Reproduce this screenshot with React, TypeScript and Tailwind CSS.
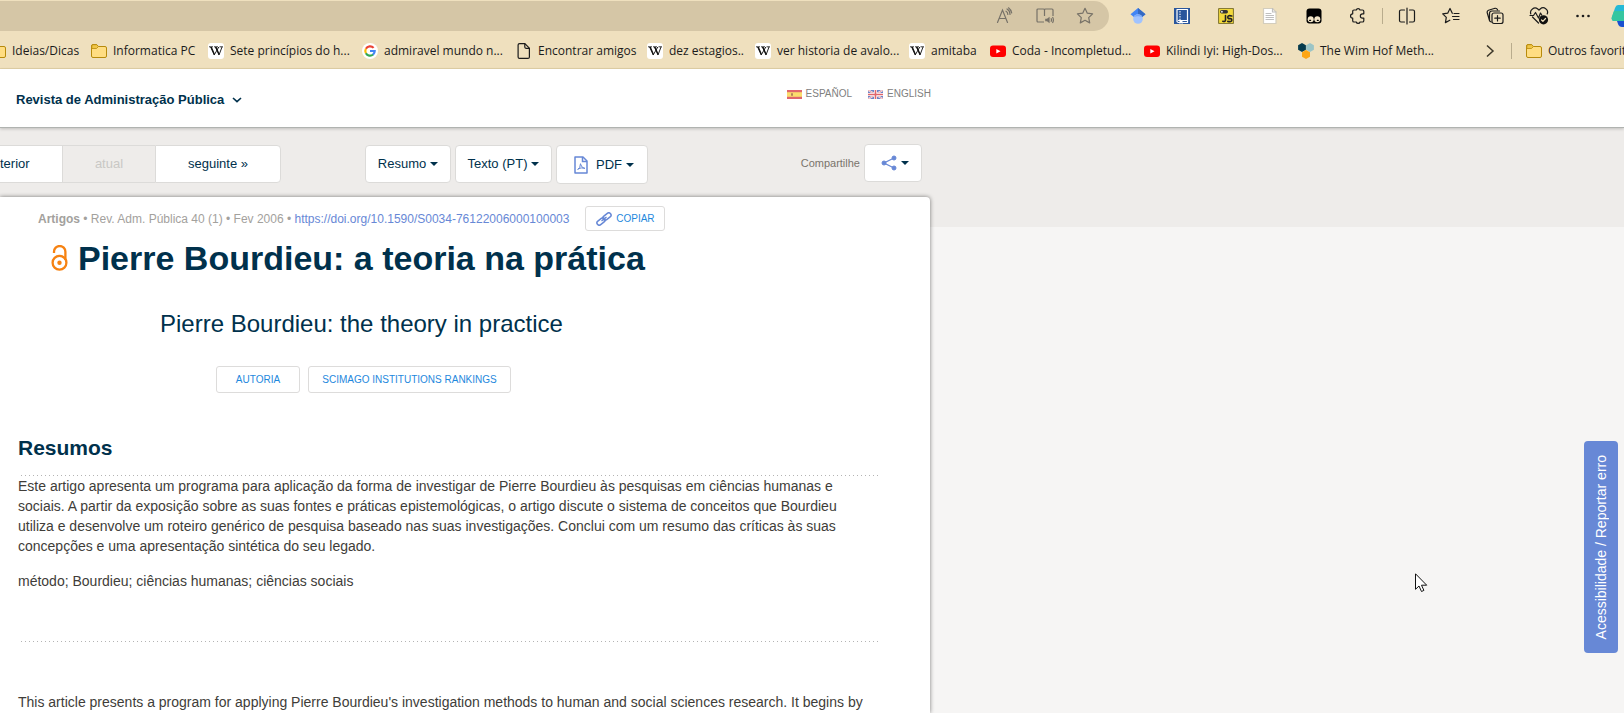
import type { ReactNode } from "react";

const ui = "font-['Open_Sans','Noto_Sans',sans-serif]";

function Folder() {
  return (
    <svg width="16" height="16" viewBox="0 0 16 16" className="shrink-0" aria-hidden="true">
      <path d="M.5 3A1.5 1.5 0 0 1 2 1.500h3.600L7.500 3.500H14A1.500 1.500 0 0 1 15.500 5v8A1.500 1.500 0 0 1 14 14.500H2A1.500 1.500 0 0 1 .5 13z" fill="#ffdd82" stroke="#b78a0c" />
      <path d="M.8 5.500h4.700l2-2L5.600 1.700H2A1.200 1.200 0 0 0 .8 3z" fill="#f0c648" stroke="#b78a0c" strokeWidth=".8" />
    </svg>
  );
}

function Wiki() {
  return (
    <span className="flex size-4 shrink-0 items-center justify-center rounded-[3px] bg-white">
      <svg width="16" height="16" viewBox="0 0 16 16" aria-hidden="true">
        <path d="M1 3.800h4M6 3.800h4M11.500 3.800h3.500" stroke="#222" strokeWidth=".9" />
        <path d="M2.700 4l3.500 8L10.800 4M7.400 4l3.600 8 3-8" fill="none" stroke="#222" strokeWidth="1" />
        <path d="M2.400 4h1.500l2.900 6.700-.6 1.500zM7.200 4h1.400l2.900 6.700-.6 1.500z" fill="#111" />
      </svg>
    </span>
  );
}

function Google() {
  return (
    <svg width="16" height="16" viewBox="0 0 16 16" className="shrink-0" aria-hidden="true">
      <circle cx="8" cy="8" r="8" fill="#fff" />
      <g fill="none" strokeWidth="2.200">
        <path d="M11.600 4.900A4.700 4.700 0 0 0 3.900 5.800" stroke="#ea4335" />
        <path d="M3.900 5.700a4.700 4.700 0 0 0 0 4.600" stroke="#fbbc05" />
        <path d="M3.900 10.200a4.700 4.700 0 0 0 7.200 1.300" stroke="#34a853" />
        <path d="M11 11.600A4.700 4.700 0 0 0 12.700 8H8" stroke="#4285f4" />
      </g>
    </svg>
  );
}

function Doc() {
  return (
    <svg width="16" height="16" viewBox="0 0 16 16" fill="none" stroke="#1b1b1b" strokeWidth="1.200" className="shrink-0" aria-hidden="true">
      <path d="M3.600.6h5.200l4.600 4.600v8.700a1.500 1.500 0 0 1-1.500 1.500H3.600a1.500 1.500 0 0 1-1.500-1.500V2.100A1.500 1.500 0 0 1 3.600.6z" />
      <path d="M8.800.8v3.300a1.200 1.200 0 0 0 1.200 1.200h3.300" />
    </svg>
  );
}

function Tube() {
  return (
    <svg width="16" height="16" viewBox="0 0 16 16" className="shrink-0" aria-hidden="true">
      <rect x="0" y="2.500" width="16" height="11.500" rx="3" fill="#f00" />
      <path d="M6.300 5.900v4.700l4.200-2.350z" fill="#fff" />
    </svg>
  );
}

function Hexes() {
  return (
    <svg width="16" height="16" viewBox="0 0 16 16" className="shrink-0" aria-hidden="true">
      <path d="M4 0l3.900 2.200v4.500L4 9 .1 6.700V2.200z" fill="#063b4d" />
      <path d="M12 0l3.900 2.200v4.500L12 9 8.100 6.700V2.200z" fill="#9cc5c6" />
      <path d="M8 7l4 2.200v4.500L8 16l-4-2.300V9.200z" fill="#fda616" />
    </svg>
  );
}

const bookmarks: { icon: ReactNode; label: string; width: string }[] = [
  { icon: <Folder />, label: "Ideias/Dicas", width: "w-[101px]" },
  { icon: <Folder />, label: "Informatica PC", width: "w-[117px]" },
  { icon: <Wiki />, label: "Sete princípios do h...", width: "w-[154px]" },
  { icon: <Google />, label: "admiravel mundo n...", width: "w-[154px]" },
  { icon: <Doc />, label: "Encontrar amigos", width: "w-[131px]" },
  { icon: <Wiki />, label: "dez estagios..", width: "w-[108px]" },
  { icon: <Wiki />, label: "ver historia de avalo...", width: "w-[154px]" },
  { icon: <Wiki />, label: "amitaba", width: "w-[81px]" },
  { icon: <Tube />, label: "Coda - Incompletud...", width: "w-[154px]" },
  { icon: <Tube />, label: "Kilindi Iyi: High-Dos...", width: "w-[154px]" },
  { icon: <Hexes />, label: "The Wim Hof Meth...", width: "w-[154px]" },
];

function Ico({ label, children, w = 18 }: { label: string; children: ReactNode; w?: number }) {
  return (
    <button type="button" aria-label={label} className="flex w-11 shrink-0 items-center justify-center">
      <svg width={w} height={w} viewBox={`0 0 ${w} ${w}`} fill="none" stroke="#1b1b1b" strokeWidth="1.200" strokeLinejoin="round" strokeLinecap="round" aria-hidden="true">
        {children}
      </svg>
    </button>
  );
}

function Toolbar() {
  return (
    <div className="flex h-8 items-center overflow-hidden">
      <div className="flex h-[30px] min-w-0 flex-1 items-center justify-end rounded-r-full bg-[#d5c6a6] pr-1">
        <button type="button" aria-label="Ler em voz alta" className="flex w-10 items-center justify-center">
          <svg width="18" height="18" viewBox="0 0 18 18" fill="none" stroke="#777268" strokeWidth="1.200" strokeLinecap="round" aria-hidden="true">
            <path d="M1.500 15.500L6.500 3l5 12.500M3.200 11.500h6.600M10 4.200a3.500 3.500 0 0 1 1.800 3.200M11 2a6 6 0 0 1 3 5.400M12.500.8A8 8 0 0 1 15.700 6" />
          </svg>
        </button>
        <button type="button" aria-label="Leitor imersivo" className="flex w-10 items-center justify-center">
          <svg width="18" height="18" viewBox="0 0 18 18" fill="none" stroke="#777268" strokeWidth="1.200" aria-hidden="true">
            <path d="M8 15H2a1 1 0 0 1-1-1V3a1 1 0 0 1 1-1h5.500a1 1 0 0 1 1 1v6M8.500 3a1 1 0 0 1 1-1H16a1 1 0 0 1 1 1v6" />
            <path d="M9.200 11.800H11l2.600-2v6.400l-2.600-2H9.200z" fill="#777268" stroke="none" />
            <path d="M15 11.300q1 1.700 0 3.400M16.500 10q1.800 3 0 6" />
          </svg>
        </button>
        <button type="button" aria-label="Favoritar" className="flex w-10 items-center justify-center">
          <svg width="18" height="18" viewBox="0 0 18 18" fill="none" stroke="#777268" strokeWidth="1.200" strokeLinejoin="round" aria-hidden="true">
            <path d="M9 1.300l2.300 4.900 5.300.7-3.900 3.700 1 5.300L9 13.300l-4.700 2.600 1-5.300L1.400 6.900l5.300-.7z" />
          </svg>
        </button>
      </div>
      <div className="flex w-[515px] shrink-0 items-center pl-[7px]">
        <Ico label="Google Acadêmico" w={16}>
          <g stroke="none">
            <path d="M8 0L.5 6.300 3.800 9h8.400l3.300-2.700z" fill="#4285f4" />
            <path d="M8 0l7.500 6.300L12.200 9H8z" fill="#356ac3" />
            <circle cx="8" cy="11" r="4.800" fill="#a0c3ff" />
            <path d="M3.600 9.200a4.900 4.900 0 0 1 8.800 0q-4.400-1.800-8.800 0z" fill="#76a7fa" />
          </g>
        </Ico>
        <Ico label="Caderno" w={16}>
          <rect width="16" height="16" fill="#2a569c" stroke="none" />
          <path d="M3 13.500V1.500h10.500v11H4.500M3 13q0 1.500 1.500 1.500h1M8.500 14.500h5v-2" stroke="#fff" />
          <path d="M6 3.500v8" stroke="#fff" strokeDasharray=".5 2" />
          <path d="M5.500 13v3l1.500-1 1.500 1v-3z" fill="#fff" stroke="none" />
        </Ico>
        <Ico label="JavaScript" w={16}>
          <rect x=".5" y=".5" width="15" height="15" rx="1" fill="#f2d93b" stroke="#877b35" />
          <rect x="2" y="2" width="8" height="3.500" rx="1.700" fill="#333" stroke="none" />
          <circle cx="3.900" cy="3.700" r="1" fill="#ddd" stroke="none" />
          <path d="M7.500 7.500v4.500q0 2-2.700 1.300M13.800 8q-4-1-4 .9t2 1.700 2 1.700-4 1.100" stroke="#222" strokeWidth="1.600" />
        </Ico>
        <Ico label="Documento" w={16}>
          <path d="M1.500.5h9l3.500 3.500v11.500H1.500z" fill="#fff" stroke="#d3cdbd" />
          <path d="M10.500.5V4H14M4 5.500h5M4 7.500h7.500M4 9.500h7.500M4 11.500h7.500" stroke="#bfbfbf" />
        </Ico>
        <Ico label="Tampermonkey" w={16}>
          <rect x=".5" y=".5" width="15" height="15" rx="3" fill="#000" stroke="none" />
          <circle cx="4.700" cy="11.300" r="3" fill="#f3e6c8" stroke="none" />
          <circle cx="11.300" cy="11.300" r="3" fill="#f3e6c8" stroke="none" />
          <path d="M3.600 12.300h1M11.300 12.300h1" stroke="#000" />
        </Ico>
        <Ico label="Extensões">
          <path d="M5 3h2.300a1.900 1.900 0 0 1 3.700 0h2.500a1.300 1.300 0 0 1 1.300 1.300v2.500h-1.300a2.100 2.100 0 0 0 0 4.300h1.300v2.600a1.300 1.300 0 0 1-1.300 1.300H11a1.900 1.900 0 0 1-3.700 0H5a1.300 1.300 0 0 1-1.300-1.300v-2.600a2.100 2.100 0 0 1 0-4.300V4.300A1.300 1.300 0 0 1 5 3z" />
        </Ico>
        <span className="mx-0.5 h-4 w-px shrink-0 bg-[#b9ac8d]" />
        <Ico label="Dividir tela">
          <path d="M9 1v16M6.500 3H3a1.500 1.500 0 0 0-1.500 1.500v9A1.500 1.500 0 0 0 3 15h3.500M11.500 3H15a1.500 1.500 0 0 1 1.500 1.500v9A1.500 1.500 0 0 1 15 15h-3.500" />
        </Ico>
        <Ico label="Favoritos">
          <path d="M10.300 6.300L8 1.500 5.700 6.200l-5 .7L4.300 10.400l-.9 5.200 4.400-2.400M12 6.500h5M10.500 9.500H17M11.500 12.500H17" />
        </Ico>
        <Ico label="Coleções">
          <rect x="6" y="6" width="11" height="10.500" rx="2" />
          <path d="M11.500 8.500v5.500M8.800 11.200h5.400M3.500 13.500L1.300 6q-.6-2 1.200-2.700L9 1.300Q10.800 1 11.500 2.700M5.200 15q-1.700-.3-1.700-2V6.500Q3.500 4 6 4h7.500" />
        </Ico>
        <Ico label="Desempenho" w={20}>
          <path d="M1.800 8a4.500 4.500 0 0 1 7-5L10 4.200 11.200 3a4.400 4.400 0 0 1 7 5M9.500 17L3.500 11M1 9.500h3.500l2-3 3 5.500 2-5 1.200 2" />
          <circle cx="14.500" cy="13.800" r="4.600" fill="#111" stroke="none" />
          <path d="M12.500 14l1.400 1.400 2.600-2.900" stroke="#efe0be" />
        </Ico>
        <Ico label="Mais">
          <g fill="#1b1b1b" stroke="none">
            <circle cx="3.500" cy="9" r="1.300" />
            <circle cx="9" cy="9" r="1.300" />
            <circle cx="14.500" cy="9" r="1.300" />
          </g>
        </Ico>
        <button type="button" aria-label="Copilot" className="flex w-11 shrink-0 items-center pl-1.5">
          <svg width="24" height="24" viewBox="0 0 24 24" className="shrink-0" aria-hidden="true">
            <path d="M7 1h10a4 4 0 0 1 3 4l-4 12H2q-2-1-1-4L4 4q1-3 3-3z" fill="#25b9d6" />
            <path d="M.8 13L3 7h14l-2 10H2.500Q.2 16 .8 13z" fill="#36c6a0" />
            <path d="M6 17h9l-1 6h-3q-3 0-4-3z" fill="#1a50d0" />
          </svg>
        </button>
      </div>
    </div>
  );
}

function BookmarksBar() {
  return (
    <nav aria-label="Favoritos" className={`${ui} flex h-9 items-center overflow-hidden pt-0.5 text-[12px] text-[#1b1b1b]`}>
      <ul className="-ml-2.5 flex shrink-0">
        {bookmarks.map((b) => (
          <li key={b.label} className={`${b.width} shrink-0`}>
            <a href="#" className="flex items-center gap-1.5 whitespace-nowrap">
              {b.icon}
              {b.label}
            </a>
          </li>
        ))}
      </ul>
      <div className="ml-auto flex shrink-0 items-center">
        <button type="button" aria-label="Mais favoritos" className="mr-4">
          <svg width="10" height="14" viewBox="0 0 10 14" fill="none" stroke="#3b3628" strokeWidth="1.500" aria-hidden="true">
            <path d="M2 1.500L8 7l-6 5.500" />
          </svg>
        </button>
        <span className="mr-3.5 h-4 w-px bg-[#b9ac8d]" />
        <a href="#" className="flex w-[98px] items-center gap-1.5 whitespace-nowrap">
          <Folder />
          Outros favorito
        </a>
      </div>
    </nav>
  );
}

function Caret() {
  return (
    <svg width="8" height="4" viewBox="0 0 8 4" className="shrink-0" aria-hidden="true">
      <path d="M0 0h8L4 4z" fill="#00314c" />
    </svg>
  );
}

function Flag({ kind }: { kind: "es" | "gb" }) {
  return kind === "es" ? (
    <svg width="15" height="9" viewBox="0 0 15 9" aria-hidden="true">
      <path d="M0 0h15v9H0z" fill="#e0656c" />
      <path d="M0 2.200h15v4.600H0z" fill="#fbdc6c" />
      <path d="M4 3.200h2v2.600H4z" fill="#b5835a" />
    </svg>
  ) : (
    <svg width="15" height="9" viewBox="0 0 15 9" aria-hidden="true">
      <path d="M0 0h15v9H0z" fill="#6f82c4" />
      <path d="M0 0l15 9M15 0L0 9" stroke="#fff" strokeWidth="1.800" />
      <path d="M0 0l15 9M15 0L0 9" stroke="#e0656c" strokeWidth=".6" />
      <path d="M7.500 0v9M0 4.500h15" stroke="#fff" strokeWidth="3" />
      <path d="M7.500 0v9M0 4.500h15" stroke="#e0656c" strokeWidth="1.600" />
    </svg>
  );
}

const navButton = "flex items-center justify-center whitespace-nowrap border border-[#dcdbd9] bg-white";

function ArticleNav() {
  return (
    <div className="flex w-full max-w-[922px] items-start pt-[17px] text-[13px] text-[#00314c]">
      <div className="flex h-[38px]">
        <button type="button" className={`${navButton} w-[63px] justify-start border-l-0`}>terior</button>
        <button type="button" disabled className="w-[92px] border-y border-[#dcdbd9] text-[#c9c8c5]">atual</button>
        <button type="button" className={`${navButton} w-[126px] rounded-r`}>seguinte »</button>
      </div>
      <div className="ml-[84px] flex gap-1">
        <button type="button" className={`${navButton} h-[38px] w-[86px] gap-1 rounded`}>Resumo <Caret /></button>
        <button type="button" className={`${navButton} h-[38px] w-[97px] gap-1 rounded`}>Texto (PT) <Caret /></button>
        <button type="button" className={`${navButton} h-[39px] w-[92px] gap-1 rounded pl-1`}>
          <svg width="14" height="18" viewBox="0 0 14 18" fill="none" stroke="#6788d6" strokeWidth="1.500" className="mr-1" aria-hidden="true">
            <path d="M1 1h8l4 4v12H1z" strokeLinejoin="round" />
            <path d="M8.500 1v4.500H13" />
            <path d="M3.500 14q3-2 3-6.500M6.500 8q1 4 4.500 4.500M4 12.800q3-1.500 7-.5" strokeWidth="1" />
          </svg>
          PDF <Caret />
        </button>
      </div>
      <div className="-mt-px ml-auto flex items-center gap-1">
        <span className="text-[11px] text-[#7a746c]">Compartilhe</span>
        <button type="button" aria-label="Compartilhar" className={`${navButton} h-[38px] w-[58px] gap-1 rounded pl-1`}>
          <svg width="16" height="16" viewBox="0 0 16 16" fill="#6788d6" stroke="#6788d6" aria-hidden="true">
            <path d="M13 3L3 8l10 5" fill="none" strokeWidth="1.300" />
            <circle cx="13" cy="3" r="2" />
            <circle cx="3" cy="8" r="2" />
            <circle cx="13" cy="13" r="2" />
          </svg>
          <Caret />
        </button>
      </div>
    </div>
  );
}

const outline = "flex items-center justify-center rounded-[3px] border border-[#dddcdb] bg-white text-[10px] text-[#1e88dd] whitespace-nowrap";

function Dots() {
  return <div className="mx-[3px] h-px bg-[repeating-linear-gradient(90deg,#b4b4b4_0_1px,transparent_1px_4px)]" />;
}

function Article() {
  return (
    <article className="-mt-[30px] w-full max-w-[930px] flex-1 rounded-tr bg-white text-[#00314c] shadow-[0_0_4px_rgba(0,0,0,0.5)]">
      <div className="flex h-[43px] items-center pl-[38px] text-[12px] text-[#a3a19d]">
        <p className="whitespace-nowrap">
          <b>Artigos</b> • Rev. Adm. Pública 40 (1) • Fev 2006 •{" "}
          <a href="#" className="text-[#6788d6]">https://doi.org/10.1590/S0034-76122006000100003</a>
        </p>
        <button type="button" className={`${outline} ml-4 h-[25px] w-[80px] gap-1`}>
          <svg width="16" height="14" viewBox="0 0 16 14" fill="none" stroke="#6788d6" strokeWidth="1.500" aria-hidden="true">
            <rect x="6.500" y="2.200" width="9" height="4.600" rx="2.300" transform="rotate(-38 11 4.500)" />
            <rect x=".5" y="7.200" width="9" height="4.600" rx="2.300" transform="rotate(-38 5 9.500)" />
            <path d="M5.500 9l5-4" />
          </svg>
          COPIAR
        </button>
      </div>
      <h1 className="flex items-center gap-2.5 pl-[51px] text-[34px] leading-9 font-bold whitespace-nowrap">
        <svg width="17" height="26" viewBox="0 0 17 26" fill="none" stroke="#f68212" strokeWidth="2.300" aria-label="Acesso aberto">
          <circle cx="8.500" cy="17.800" r="6.900" />
          <circle cx="8.500" cy="17.800" r="2.200" fill="#f68212" stroke="none" />
          <path d="M3 8V6.700a5.500 5.500 0 0 1 11.400 0V15" />
        </svg>
        Pierre Bourdieu: a teoria na prática
      </h1>
      <h2 className="mt-8 pl-[160px] text-[24px] leading-8 whitespace-nowrap">Pierre Bourdieu: the theory in practice</h2>
      <div className="mt-[26px] flex gap-2 pl-[216px]">
        <button type="button" className={`${outline} h-[27px] w-[84px]`}>AUTORIA</button>
        <button type="button" className={`${outline} h-[27px] w-[203px]`}>SCIMAGO INSTITUTIONS RANKINGS</button>
      </div>
      <div className="pr-[48px] pl-[18px]">
        <h3 className="mt-[41px] text-[21px] leading-7 font-bold">Resumos</h3>
        <div className="mt-[13px]">
          <Dots />
        </div>
        <div className="text-[14px] leading-5 whitespace-nowrap text-[#403d39]">
          <p>
            Este artigo apresenta um programa para aplicação da forma de investigar de Pierre Bourdieu às pesquisas em ciências humanas e<br />
            sociais. A partir da exposição sobre as suas fontes e práticas epistemológicas, o artigo discute o sistema de conceitos que Bourdieu<br />
            utiliza e desenvolve um roteiro genérico de pesquisa baseado nas suas investigações. Conclui com um resumo das críticas às suas<br />
            concepções e uma apresentação sintética do seu legado.
          </p>
          <p className="mt-[15px] mb-[50px]">método; Bourdieu; ciências humanas; ciências sociais</p>
          <Dots />
          <p className="mt-[50px]">This article presents a program for applying Pierre Bourdieu's investigation methods to human and social sciences research. It begins by</p>
        </div>
      </div>
    </article>
  );
}

export default function App() {
  return (
    <div className="flex h-screen flex-col overflow-hidden bg-[#f6f5f4] font-['Liberation_Sans',Arial,sans-serif]">
      <div className="shrink-0 border-b border-[#e3d2a8] bg-[#efe0be]">
        <Toolbar />
        <BookmarksBar />
      </div>
      <header className="relative flex h-[59px] shrink-0 border-b border-[#b0b3b0] bg-white shadow-[0_1px_3px_rgba(0,0,0,0.2)]">
        <div className="flex w-full max-w-[931px] items-start justify-between pt-[17px] pl-4">
          <button type="button" className="mt-1 flex items-center gap-2 text-[13px] leading-5 font-bold whitespace-nowrap text-[#00314c]">
            Revista de Administração Pública
            <svg width="10" height="6" viewBox="0 0 10 6" fill="none" stroke="#00314c" strokeWidth="1.600" aria-hidden="true">
              <path d="M1 1l4 3.700L9 1" />
            </svg>
          </button>
          <div className="flex gap-4 text-[10px] leading-4 text-[#80807e]">
            <a href="#" className="flex items-center gap-1"><Flag kind="es" />ESPAÑOL</a>
            <a href="#" className="flex items-center gap-1"><Flag kind="gb" />ENGLISH</a>
          </div>
        </div>
      </header>
      <div className="h-[99px] shrink-0 bg-[#eeecea]">
        <ArticleNav />
      </div>
      <Article />
      <button type="button" className="fixed top-[441px] right-1.5 flex h-[212px] w-[34px] items-center justify-center rounded bg-[#6788d6] text-[14px] text-white">
        <span className="rotate-180 whitespace-nowrap [writing-mode:vertical-rl]">Acessibilidade / Reportar erro</span>
      </button>
      <svg width="13" height="20" viewBox="0 0 13 20" className="pointer-events-none fixed top-[573px] left-[1415px]" aria-hidden="true">
        <path d="M.5.800v15.500l3.500-3.300 2.500 5.500 2.400-1.100-2.400-5.200h5.200z" fill="#fff" stroke="#111" />
      </svg>
    </div>
  );
}
